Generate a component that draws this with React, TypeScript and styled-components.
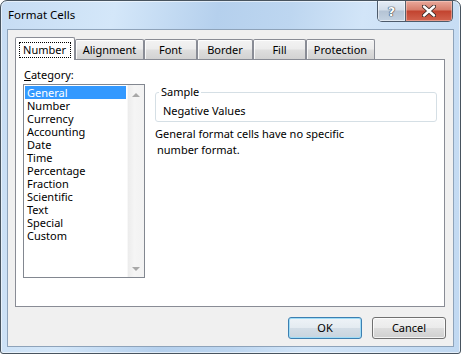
import React from 'react';
import styled, { createGlobalStyle } from 'styled-components';

const Global = createGlobalStyle`
  html, body { margin: 0; padding: 0; background: #ffffff; }
  body {
    font-family: "Noto Sans", "Liberation Sans", sans-serif;
    font-size: 11px;
    color: #000;
  }
  * { box-sizing: border-box; }
`;

const Window = styled.div`
  width: 461px;
  height: 354px;
  border: 1px solid #48545f;
  border-radius: 7px 7px 3px 3px;
  background: linear-gradient(100deg, #c6dcf3 0%, #d4e7f9 22%, #b5d0ed 42%, #bdd6f0 56%, #d2e5f8 70%, #c0d8f1 100%);
  box-shadow: inset 0 0 0 1px rgba(255, 255, 255, 0.55);
  display: flex;
  flex-direction: column;
  padding: 0 6px 6px 6px;
  overflow: hidden;
`;

const TitleBar = styled.div`
  height: 28px;
  display: flex;
  align-items: flex-start;
  justify-content: space-between;
`;

const Title = styled.div`
  margin-top: 7px;
  padding-left: 1px;
  line-height: 14px;
  font-size: 11.5px;
  color: #000;
`;

const CaptionGroup = styled.div`
  display: flex;
  margin-right: 1px;
  height: 21px;
  border: 1px solid #4d5b6b;
  border-top: none;
  border-radius: 0 0 5px 5px;
  overflow: hidden;
`;

const HelpButton = styled.div`
  width: 28px;
  display: flex;
  align-items: center;
  justify-content: center;
  border-right: 1px solid #56606c;
  background: linear-gradient(#e4ecf5 0%, #d2dde9 45%, #b4c3d4 50%, #c3d2e2 100%);
  box-shadow: inset 0 0 0 1px rgba(255, 255, 255, 0.5);
  font-family: "DejaVu Sans", sans-serif;
  font-weight: bold;
  font-size: 13px;
  color: #ffffff;
  text-shadow: 0 0 1px #2c3a4a, 0 0 1px #2c3a4a, 0 0 1px #2c3a4a;
`;

const CloseButton = styled.div`
  width: 46px;
  display: flex;
  align-items: center;
  justify-content: center;
  background: linear-gradient(#e9a99b 0%, #d67d6b 45%, #c2432f 50%, #d2634e 100%);
  box-shadow: inset 0 0 0 1px rgba(255, 220, 210, 0.45);
`;

const Client = styled.div`
  flex: 1;
  border: 1px solid #8ea3ba;
  background: #f0f0f0;
  padding: 7px 7px 7px 7px;
  display: flex;
  flex-direction: column;
`;

const TabRow = styled.div`
  height: 22px;
  display: flex;
  align-items: flex-end;
`;

const Tab = styled.div<{ $w: number; $active?: boolean }>`
  width: ${(p) => p.$w}px;
  height: ${(p) => (p.$active ? 23 : 20)}px;
  margin-bottom: ${(p) => (p.$active ? -1 : 0)}px;
  position: relative;
  z-index: ${(p) => (p.$active ? 2 : 1)};
  border: 1px solid #898c95;
  border-bottom: none;
  border-radius: 2px 2px 0 0;
  background: ${(p) =>
    p.$active
      ? '#ffffff'
      : 'linear-gradient(#f3f3f3 0%, #ececec 48%, #dedede 52%, #d2d2d2 100%)'};
  box-shadow: ${(p) => (p.$active ? 'none' : 'inset 1px 1px 0 rgba(255,255,255,0.8)')};
  display: flex;
  justify-content: center;
  align-items: ${(p) => (p.$active ? 'flex-start' : 'center')};
  padding-top: ${(p) => (p.$active ? 4 : 0)}px;
  line-height: 14px;
`;

const FocusLabel = styled.span`
  display: inline-flex;
  align-items: center;
  justify-content: center;
  width: 52px;
  height: 16px;
  margin-left: -1px;
  border: 1px dotted #000;
`;

const Panel = styled.div`
  width: 430px;
  height: 248px;
  border: 1px solid #898c95;
  background: #ffffff;
  padding: 8px 0 0 7px;
  display: grid;
  grid-template-columns: 122px 282px;
  column-gap: 10px;
  align-items: start;
`;

const LeftCol = styled.div`
  display: flex;
  flex-direction: column;
`;

const Label = styled.div`
  line-height: 14px;
  height: 14px;
  margin-bottom: 2px;
  padding-left: 1px;
`;

const Underline = styled.span`
  text-decoration: underline;
`;

const ListBox = styled.div`
  width: 122px;
  height: 194px;
  border: 1px solid #828790;
  display: flex;
  background: #fff;
`;

const Items = styled.div`
  flex: 1;
  padding: 1px 1px 0 1px;
  display: flex;
  flex-direction: column;
`;

const Item = styled.div<{ $selected?: boolean }>`
  height: 13px;
  line-height: 13px;
  padding-left: 2px;
  white-space: nowrap;
  background: ${(p) => (p.$selected ? '#3399ff' : 'transparent')};
  color: ${(p) => (p.$selected ? '#ffffff' : '#000000')};
`;

const ScrollBar = styled.div`
  width: 17px;
  background: linear-gradient(to right, #ececec, #f5f5f5 40%, #f2f2f2);
  border-left: 1px solid #f8f8f8;
  display: flex;
  flex-direction: column;
  justify-content: space-between;
`;

const ScrollButton = styled.div`
  height: 17px;
  display: flex;
  align-items: center;
  justify-content: center;
`;

const Arrow = styled.div<{ $down?: boolean }>`
  width: 0;
  height: 0;
  border-left: 4px solid transparent;
  border-right: 4px solid transparent;
  ${(p) =>
    p.$down ? 'border-top: 4px solid #a8a8a8;' : 'border-bottom: 4px solid #a8a8a8;'}
  margin-top: ${(p) => (p.$down ? 0 : 2)}px;
`;

const RightCol = styled.div`
  display: flex;
  flex-direction: column;
`;

const Group = styled.fieldset`
  margin: 17px 0 0 0;
  padding: 5px 6px 3px 7px;
  border: 1px solid #d5dfe5;
  border-radius: 3px;
  min-width: 0;
`;

const Legend = styled.legend`
  margin-left: -4px;
  padding: 0 2px;
  line-height: 14px;
`;

const SampleText = styled.div`
  line-height: 14px;
`;

const Description = styled.div`
  margin-top: 4px;
  line-height: 16px;
`;

const DescLine = styled.div<{ $indent?: number }>`
  padding-left: ${(p) => p.$indent ?? 0}px;
`;

const ButtonRow = styled.div`
  margin-top: 10px;
  display: flex;
  justify-content: flex-end;
  gap: 10px;
`;

const Button = styled.div<{ $default?: boolean }>`
  width: 74px;
  height: 22px;
  border: 1px solid ${(p) => (p.$default ? '#3c7fb1' : '#707070')};
  border-radius: 3px;
  background: ${(p) =>
    p.$default
      ? 'linear-gradient(#eef3f7 0%, #e4ebf1 48%, #d3dde6 52%, #c8d4de 100%)'
      : 'linear-gradient(#f2f2f2 0%, #ebebeb 48%, #dddddd 52%, #cfcfcf 100%)'};
  box-shadow: ${(p) =>
    p.$default ? 'inset 0 0 0 1px #9fdcf7' : 'inset 0 0 0 1px rgba(255,255,255,0.75)'};
  display: flex;
  align-items: center;
  justify-content: center;
  line-height: 14px;
`;

const tabs = [
  { label: 'Number', w: 60 },
  { label: 'Alignment', w: 69 },
  { label: 'Font', w: 53 },
  { label: 'Border', w: 56 },
  { label: 'Fill', w: 53 },
  { label: 'Protection', w: 69 },
];

const categories = [
  'General',
  'Number',
  'Currency',
  'Accounting',
  'Date',
  'Time',
  'Percentage',
  'Fraction',
  'Scientific',
  'Text',
  'Special',
  'Custom',
];

export default function App() {
  return (
    <>
      <Global />
      <Window>
        <TitleBar>
          <Title>Format Cells</Title>
          <CaptionGroup>
            <HelpButton>?</HelpButton>
            <CloseButton>
              <svg width="14" height="12" viewBox="0 0 14 12">
                <path d="M2 1.5 L12 10.5 M12 1.5 L2 10.5" stroke="#3a2a28" strokeWidth="4.2" strokeLinecap="round" />
                <path d="M2 1.5 L12 10.5 M12 1.5 L2 10.5" stroke="#ffffff" strokeWidth="2.4" strokeLinecap="round" />
              </svg>
            </CloseButton>
          </CaptionGroup>
        </TitleBar>
        <Client>
          <TabRow>
            {tabs.map((t, i) => (
              <Tab key={t.label} $w={t.w} $active={i === 0}>
                {i === 0 ? <FocusLabel>{t.label}</FocusLabel> : t.label}
              </Tab>
            ))}
          </TabRow>
          <Panel>
            <LeftCol>
              <Label>
                <Underline>C</Underline>ategory:
              </Label>
              <ListBox>
                <Items>
                  {categories.map((c, i) => (
                    <Item key={c} $selected={i === 0}>
                      {c}
                    </Item>
                  ))}
                </Items>
                <ScrollBar>
                  <ScrollButton>
                    <Arrow />
                  </ScrollButton>
                  <ScrollButton>
                    <Arrow $down />
                  </ScrollButton>
                </ScrollBar>
              </ListBox>
            </LeftCol>
            <RightCol>
              <Group>
                <Legend>Sample</Legend>
                <SampleText>Negative Values</SampleText>
              </Group>
              <Description>
                <DescLine>General format cells have no specific</DescLine>
                <DescLine $indent={2}>number format.</DescLine>
              </Description>
            </RightCol>
          </Panel>
          <ButtonRow>
            <Button $default>OK</Button>
            <Button>Cancel</Button>
          </ButtonRow>
        </Client>
      </Window>
    </>
  );
}
